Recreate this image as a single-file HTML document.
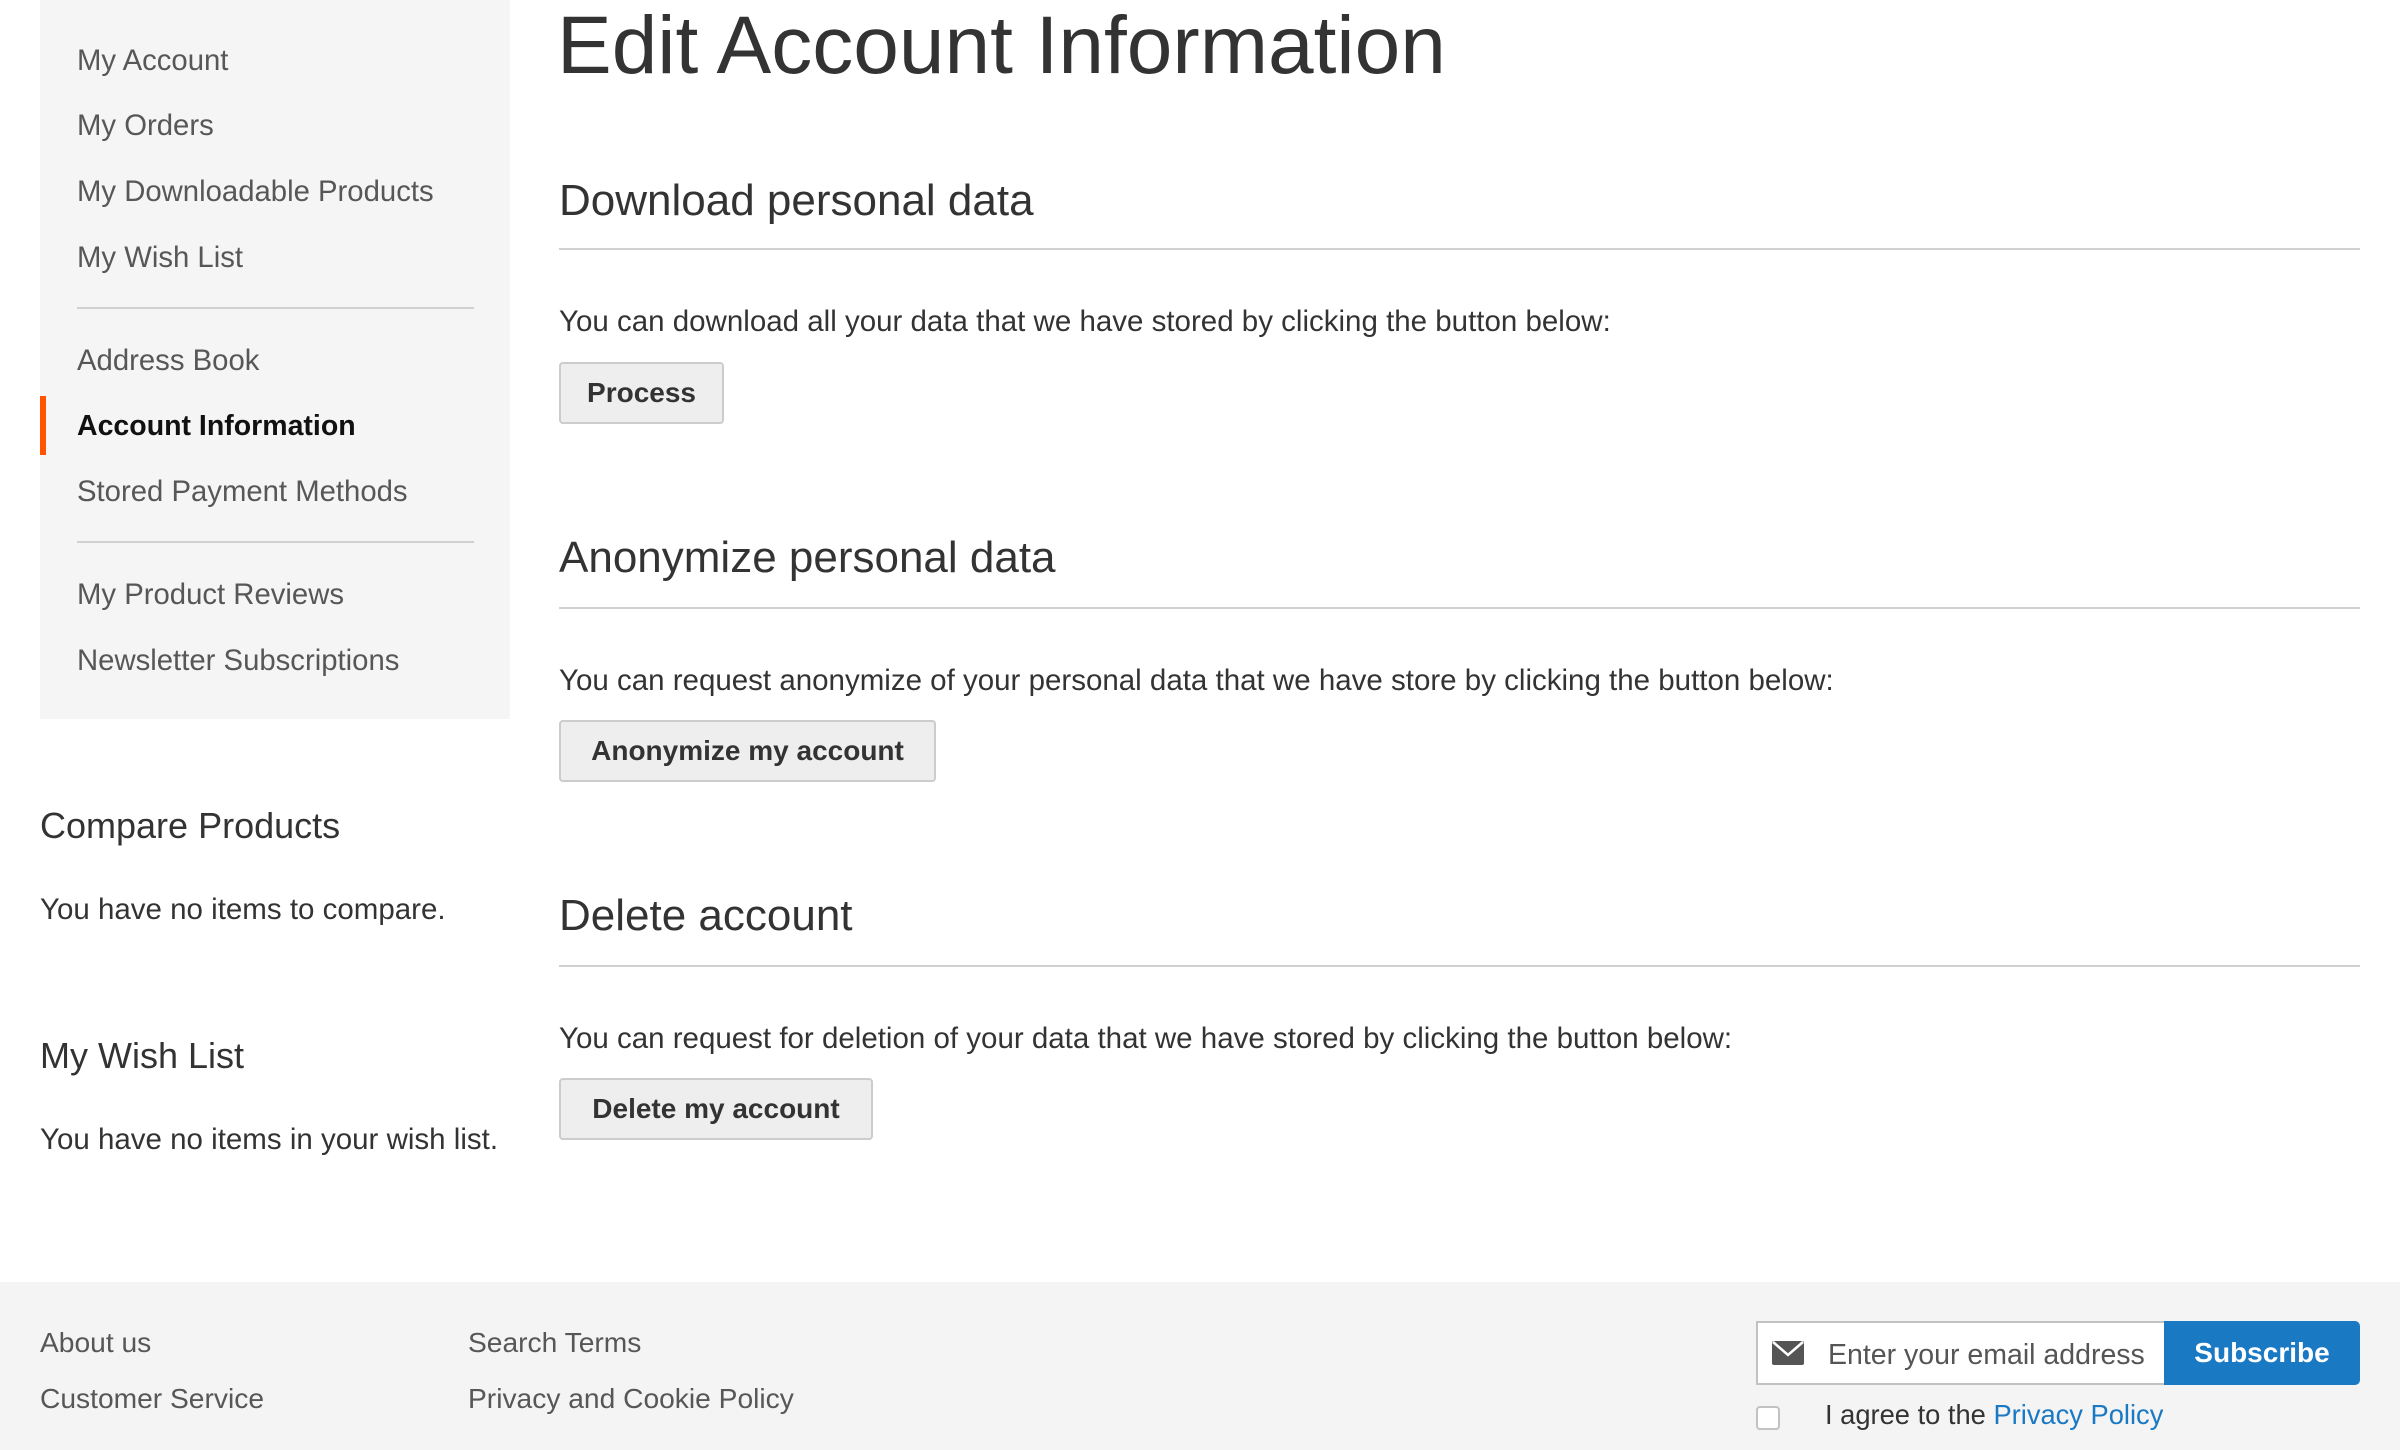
<!DOCTYPE html>
<html><head><meta charset="utf-8"><style>
*{margin:0;padding:0;box-sizing:border-box}
body{width:2400px;height:1450px;position:relative;background:#fff;font-family:"Liberation Sans",sans-serif;color:#333;overflow:hidden}
.a{position:absolute;white-space:nowrap}
.side{position:absolute;left:40px;top:0;width:470px;height:719px;background:#f5f5f5}
.nav{position:absolute;left:77px;font-size:29.3px;line-height:40px;color:#575757}
.hr{position:absolute;height:2px;background:#d1d1d1}
.h2{font-size:44px;font-weight:300;line-height:56px;color:#333}
.p{font-size:29.5px;line-height:40px;color:#333}
.btn{position:absolute;left:559px;height:62px;background:#eee;border:2px solid #ccc;border-radius:4px;font-weight:bold;font-size:28px;line-height:58px;text-align:center;color:#333}
.foot{position:absolute;left:0;top:1282px;width:2400px;height:168px;background:#f4f4f4}
.fl{font-size:28.2px;line-height:40px;color:#575757}
</style></head><body>
<div class="side"></div>
<div class="nav" style="top:41px">My Account</div>
<div class="nav" style="top:106px">My Orders</div>
<div class="nav" style="top:172px">My Downloadable Products</div>
<div class="nav" style="top:238px">My Wish List</div>
<div class="hr" style="left:77px;width:397px;top:307px"></div>
<div class="nav" style="top:341px">Address Book</div>
<div style="position:absolute;left:40px;top:396px;width:6px;height:59px;background:#ff5501"></div>
<div class="nav" style="top:406px;color:#111;font-weight:bold;font-size:28.5px">Account Information</div>
<div class="nav" style="top:472px">Stored Payment Methods</div>
<div class="hr" style="left:77px;width:397px;top:541px"></div>
<div class="nav" style="top:575px">My Product Reviews</div>
<div class="nav" style="top:641px">Newsletter Subscriptions</div>

<div class="a" style="left:40px;top:803px;font-size:36px;line-height:46px;color:#333">Compare Products</div>
<div class="a p" style="left:40px;top:890px">You have no items to compare.</div>
<div class="a" style="left:40px;top:1033px;font-size:36px;line-height:46px;color:#333">My Wish List</div>
<div class="a p" style="left:40px;top:1120px">You have no items in your wish list.</div>

<div class="a" style="left:557px;top:-4px;font-size:82px;line-height:100px;color:#333">Edit Account Information</div>

<div class="a h2" style="left:559px;top:173px">Download personal data</div>
<div class="hr" style="left:559px;width:1801px;top:248px"></div>
<div class="a p" style="left:559px;top:302px">You can download all your data that we have stored by clicking the button below:</div>
<div class="btn" style="top:362px;width:165px">Process</div>

<div class="a h2" style="left:559px;top:530px">Anonymize personal data</div>
<div class="hr" style="left:559px;width:1801px;top:607px"></div>
<div class="a p" style="left:559px;top:661px">You can request anonymize of your personal data that we have store by clicking the button below:</div>
<div class="btn" style="top:720px;width:377px">Anonymize my account</div>

<div class="a h2" style="left:559px;top:888px">Delete account</div>
<div class="hr" style="left:559px;width:1801px;top:965px"></div>
<div class="a p" style="left:559px;top:1019px">You can request for deletion of your data that we have stored by clicking the button below:</div>
<div class="btn" style="top:1078px;width:314px">Delete my account</div>

<div class="foot"></div>
<div class="a fl" style="left:40px;top:1322px">About us</div>
<div class="a fl" style="left:40px;top:1378px">Customer Service</div>
<div class="a fl" style="left:468px;top:1322px">Search Terms</div>
<div class="a fl" style="left:468px;top:1378px">Privacy and Cookie Policy</div>

<div style="position:absolute;left:1756px;top:1321px;width:410px;height:64px;background:#fff;border:2px solid #c2c2c2"></div>
<svg class="a" style="left:1772px;top:1341px" width="32" height="24" viewBox="0 0 32 24"><path d="M2 0H30a2 2 0 0 1 2 2V22a2 2 0 0 1-2 2H2a2 2 0 0 1-2-2V2a2 2 0 0 1 2-2z" fill="#555"/><path d="M1 1L16 14L31 1" fill="none" stroke="#fff" stroke-width="2.5"/></svg>
<div class="a" style="left:1828px;top:1335px;font-size:28.5px;line-height:40px;color:#555">Enter your email address</div>
<div style="position:absolute;left:2164px;top:1321px;width:196px;height:64px;background:#1979c3;border-radius:0 5px 5px 0;color:#fff;font-weight:bold;font-size:28px;line-height:64px;text-align:center">Subscribe</div>
<div style="position:absolute;left:1756px;top:1406px;width:24px;height:24px;background:#fff;border:2px solid #c2c2c2;border-radius:4px"></div>
<div class="a" style="left:1825px;top:1395px;font-size:27.3px;line-height:40px;color:#333">I agree to the <span style="color:#1979c3">Privacy Policy</span></div>
</body></html>
